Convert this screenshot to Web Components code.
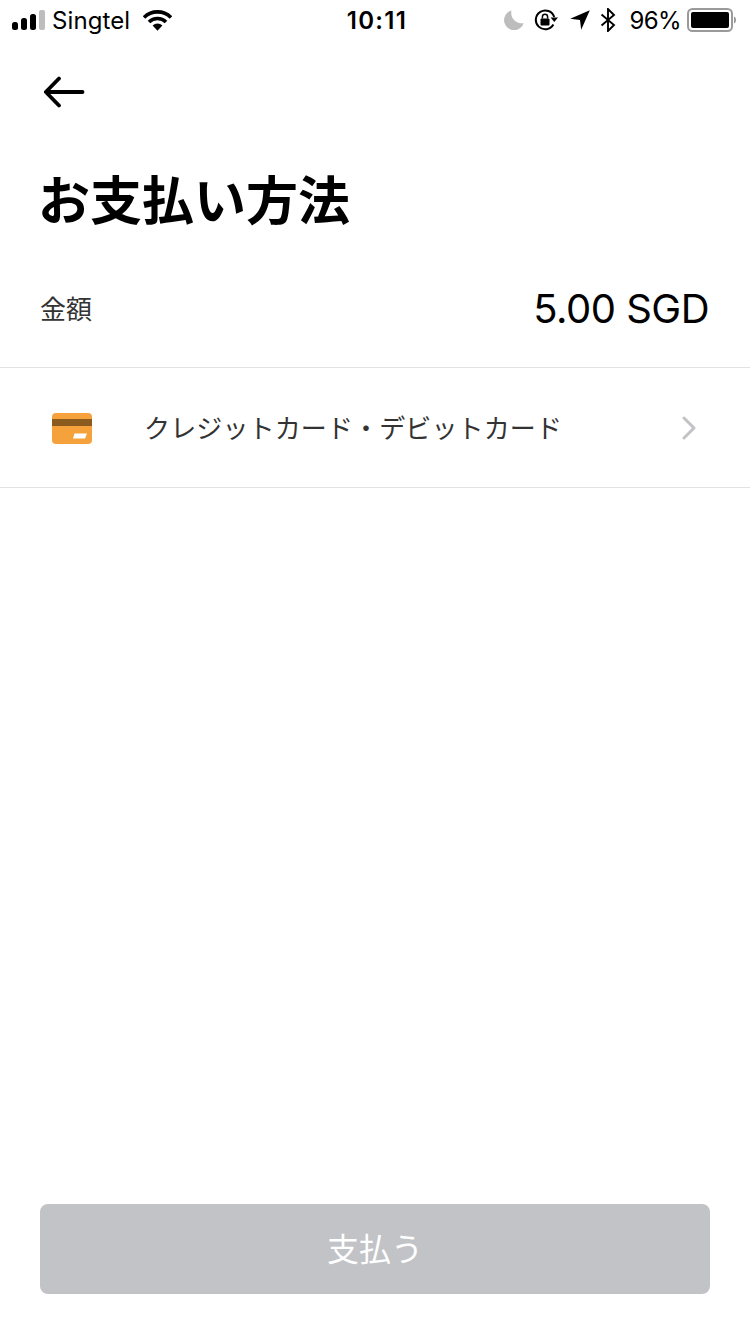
<!DOCTYPE html>
<html lang="ja">

<head>
    <meta charset="UTF-8">
    <meta name="viewport" content="width=device-width, initial-scale=1.0">
    <title>お支払い方法</title>
    <style>
        html, body { margin: 0; padding: 0; background: #fff; }
        body { font-family: "Inter", "Noto Sans CJK JP", sans-serif; }
    </style>

<template id="status-bar-template">
    <style>
        :host {
            display: grid;
            grid-template-columns: 1fr auto 1fr;
            align-items: center;
            height: 40px;
            color: #000;
            font: 24px "Inter", "Liberation Sans", sans-serif;
        }
        .left, .right { display: flex; align-items: center; }
        .left { padding-left: 12px; }
        .right { justify-content: flex-end; padding-right: 14px; }
        .carrier { margin-left: 7px; letter-spacing: .1px; }
        .wifi { margin-left: 13px; }
        .time { font-weight: 600; letter-spacing: 1.300px; margin-left: 4px; }
        .moon { margin-right: 10px; }
        .lock { margin-right: 12px; }
        .arrow { margin-right: 10px; }
        .bt { margin-right: 13px; }
        .pct { margin-right: 6px; letter-spacing: -.6px; }
        svg { display: block; }
    </style>
    <div class="left">
        <svg width="33" height="20" viewBox="0 0 33 20">
            <rect x="0" y="12" width="6" height="8" rx="2.5" fill="#000"/>
            <rect x="9" y="8" width="6" height="12" rx="2.5" fill="#000"/>
            <rect x="18" y="4" width="6" height="16" rx="2.5" fill="#000"/>
            <rect x="27" y="0" width="6" height="20" rx="2" fill="#bdbdbd"/>
        </svg>
        <span class="carrier">Singtel</span>
        <svg class="wifi" width="29" height="21" viewBox="0 0 29 21">
            <path d="M1 7.5 A19 19 0 0 1 28 7.5" fill="none" stroke="#000" stroke-width="3.6"/>
            <path d="M6 12 A12 12 0 0 1 23 12" fill="none" stroke="#000" stroke-width="3.6"/>
            <path d="M9.6 15.6 A7 7 0 0 1 19.4 15.6 L14.5 20.8 Z" fill="#000"/>
        </svg>
    </div>
    <div class="time">10:11</div>
    <div class="right">
        <svg class="moon" width="20" height="20" viewBox="0 0 20 20">
            <path d="M7.5 0.5 A10 10 0 1 0 19.6 13.2 A10.5 10.5 0 0 1 7.5 0.5 Z" fill="#bdbdbd"/>
        </svg>
        <svg class="lock" width="24" height="22" viewBox="0 0 24 22">
            <path d="M20.2 8 A9.4 9.4 0 1 0 19.4 15.5" fill="none" stroke="#000" stroke-width="2"/>
            <path d="M16.6 8.4 L24 8.4 L20.3 13 Z" fill="#000"/>
            <rect x="6.5" y="9.5" width="9" height="7" rx="1" fill="#000"/>
            <path d="M8.4 9.5 V7.8 A2.6 2.6 0 0 1 13.6 7.8 V9.5" fill="none" stroke="#000" stroke-width="1.5"/>
        </svg>
        <svg class="arrow" width="20" height="20" viewBox="0 0 20 20">
            <path d="M19.8 0.2 L0.2 8.8 L10 10 L11.2 19.8 Z" fill="#000"/>
        </svg>
        <svg class="bt" width="16" height="24" viewBox="0 0 16 24">
            <path d="M1.500 6.500 L14 17 L8 23 V1 L14 7 L1.500 17.500" fill="none" stroke="#000" stroke-width="1.9"/>
        </svg>
        <span class="pct">96%</span>
        <svg width="49" height="24" viewBox="0 0 49 24">
            <rect x="1" y="1" width="44" height="22" rx="4.5" fill="none" stroke="#9a9a9a" stroke-width="2"/>
            <rect x="4" y="4" width="38" height="16" rx="2" fill="#000"/>
            <path d="M47 8.5 C48.500 9 49 10.500 49 12 C49 13.500 48.500 15 47 15.500 Z" fill="#9a9a9a"/>
        </svg>
    </div>
</template>

<template id="back-nav-template">
    <style>
        :host { display: block; padding: 36px 0 0 44px; height: 40px; }
        svg { display: block; }
    </style>
    <svg width="41" height="32" viewBox="0 0 41 32">
        <path d="M38.500 16 H2 M15 2.500 L1.800 16 L15 29.500" fill="none" stroke="#000" stroke-width="3.800" stroke-linecap="round" stroke-linejoin="round"/>
    </svg>
</template>

<template id="page-title-template">
    <style>
        :host {
            display: block;
            margin: 0;
            padding: 52px 40px 1px 38px;
            font: 700 52px/60px "Noto Sans CJK JP", sans-serif;
            color: #000;
        }
    </style>
    <slot></slot>
</template>

<template id="amount-row-template">
    <style>
        :host {
            display: flex;
            justify-content: space-between;
            align-items: center;
            height: 116px;
            padding: 22px 41px 0 40px;
            border-bottom: 1px solid #e2e2e4;
        }
        .label { font: 26px "Noto Sans CJK JP", sans-serif; color: #333; margin-bottom: 4px; }
        .value { font: 40px "Inter", "Liberation Sans", sans-serif; color: #000; letter-spacing: -.5px; margin-bottom: 2px; }
    </style>
    <span class="label"><slot name="label"></slot></span>
    <span class="value"><slot name="value"></slot></span>
</template>

<template id="pay-option-template">
    <style>
        :host {
            display: flex;
            align-items: center;
            height: 119px;
            padding: 0 54px 0 52px;
            border-bottom: 1px solid #e2e2e4;
            font: 26px "Noto Sans CJK JP", sans-serif;
            color: #333;
        }
        .text { flex: 1; margin: 0 0 2px 52px; letter-spacing: .13px; }
        svg { display: block; }
        .card { margin-top: 1px; }
        .chev { margin-top: 1px; }
    </style>
    <svg class="card" width="40" height="31" viewBox="0 0 40 31">
        <rect width="40" height="31" rx="4" fill="#f5a23c"/>
        <rect y="6" width="40" height="7" fill="#8a5a1f"/>
        <path d="M22.500 20.500 H35 L33 25.500 H21 Z" fill="#fff"/>
    </svg>
    <span class="text"><slot></slot></span>
    <svg class="chev" width="14" height="24" viewBox="0 0 14 24">
        <path d="M2 2 L12 12 L2 22" fill="none" stroke="#c2c3c6" stroke-width="3" stroke-linecap="round" stroke-linejoin="round"/>
    </svg>
</template>

<template id="pay-button-template">
    <style>
        :host { display: block; margin-top: auto; padding: 0 40px 40px; }
        .btn {
            display: flex;
            align-items: center;
            justify-content: center;
            height: 86px;
            padding-bottom: 4px;
            border-radius: 8px;
            background: #c2c3c7;
            color: #fff;
            font: 32px "Noto Sans CJK JP", sans-serif;
        }
    </style>
    <div class="btn"><slot></slot></div>
</template>

<template id="pay-page-template">
    <style>
        :host {
            display: flex;
            flex-direction: column;
            width: 750px;
            height: 1334px;
            overflow: hidden;
            background: #fff;
        }
    </style>
    <slot></slot>
</template>

<script>
    function simple(name) {
        customElements.define(name, class extends HTMLElement {
            constructor() {
                super();
                let template = document.getElementById(name + "-template");
                let shadowRoot = this.attachShadow({ mode: "open" });
                shadowRoot.appendChild(template.content.cloneNode(true));
            }
        });
    }
    ["status-bar", "back-nav", "page-title", "amount-row", "pay-option", "pay-button", "pay-page"].forEach(simple);
</script>
</head>

<body>
    <pay-page>
        <status-bar></status-bar>
        <back-nav></back-nav>
        <page-title>お支払い方法</page-title>
        <amount-row>
            <span slot="label">金額</span>
            <span slot="value">5.00 SGD</span>
        </amount-row>
        <pay-option>クレジットカード・デビットカード</pay-option>
        <pay-button>支払う</pay-button>
    </pay-page>
</body>

</html>
